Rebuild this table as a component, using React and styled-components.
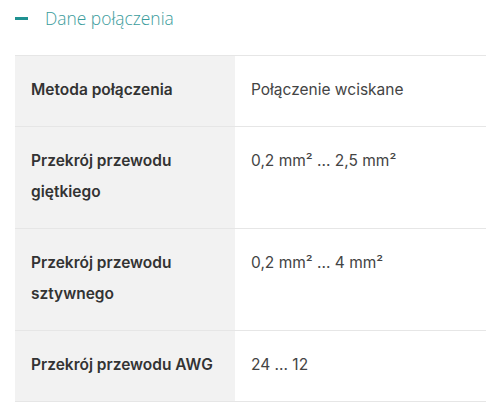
import React from 'react';
import styled, { createGlobalStyle } from 'styled-components';

const GlobalStyle = createGlobalStyle`
    html, body {
        margin: 0;
        padding: 0;
        background: #ffffff;
    }
`;

const rows = [
    { label: ['Metoda połączenia'], value: 'Połączenie wciskane' },
    { label: ['Przekrój przewodu', 'giętkiego'], value: '0,2 mm² ... 2,5 mm²' },
    { label: ['Przekrój przewodu', 'sztywnego'], value: '0,2 mm² ... 4 mm²' },
    { label: ['Przekrój przewodu AWG'], value: '24 ... 12' },
];

const App = () => {
    return (
        <Section>
            <GlobalStyle />
            <Header>
                <Minus />
                <Title>Dane połączenia</Title>
            </Header>
            <Table>
                {rows.map((row, i) => (
                    <Row key={i}>
                        <Label>
                            {row.label.map((line, j) => (
                                <span key={j}>{line}</span>
                            ))}
                        </Label>
                        <Value>{row.value}</Value>
                    </Row>
                ))}
            </Table>
        </Section>
    );
};

const Section = styled.section`
    padding: 0 0 0 15px;
    width: 471px;
`;

const Header = styled.div`
    display: flex;
    align-items: center;
    height: 36px;
    gap: 17px;
    margin-bottom: 19px;
`;

const Minus = styled.span`
    display: block;
    width: 13px;
    height: 3px;
    background: #1f9191;
`;

const Title = styled.h3`
    margin: 0;
    font-family: "Open Sans", "Noto Sans", sans-serif;
    font-weight: 300;
    font-size: 17.4px;
    color: #3a9c9c;
`;

const Table = styled.div`
    border-top: 1px solid #e6e6e6;
`;

const Row = styled.div`
    display: grid;
    grid-template-columns: 220px 1fr;
    border-bottom: 1px solid #e6e6e6;
`;

const Label = styled.div`
    background: #f2f2f2;
    padding: 18px 16px 21px 16px;
    display: flex;
    flex-direction: column;
    font-family: Inter, Lato, sans-serif;
    font-weight: 600;
    font-size: 15.5px;
    line-height: 31px;
    color: #333333;
`;

const Value = styled.div`
    padding: 18px 16px 21px;
    font-family: Inter, "Liberation Sans", sans-serif;
    font-size: 15.5px;
    line-height: 31px;
    color: #444444;
`;

export default App;
